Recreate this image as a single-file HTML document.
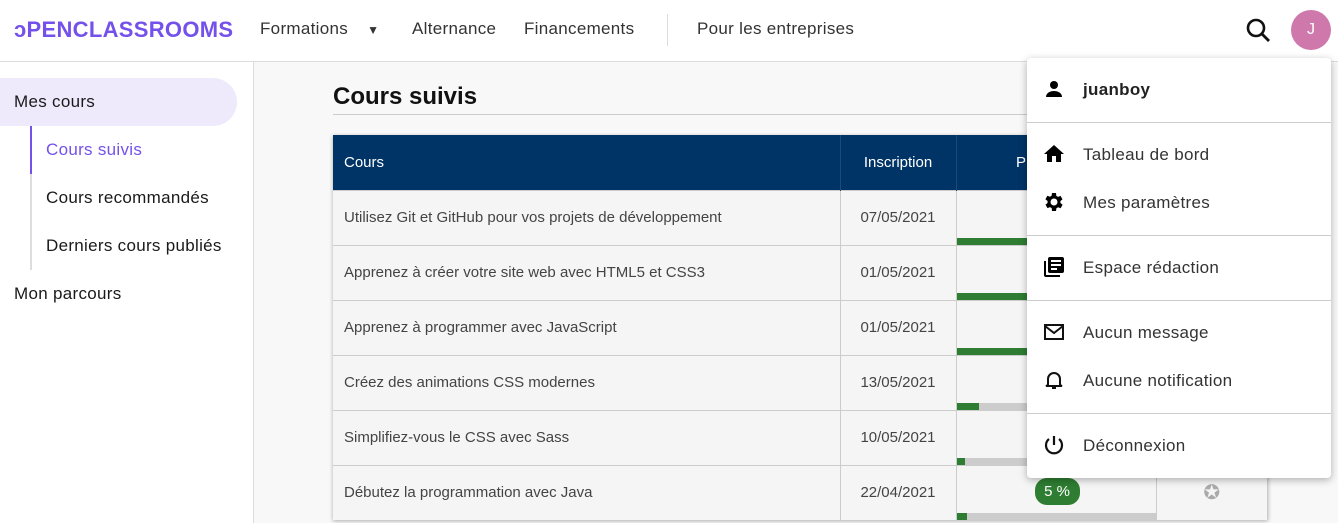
<!DOCTYPE html>
<html><head><meta charset="utf-8"><style>
*{box-sizing:border-box;margin:0;padding:0}
body{width:1338px;height:523px;overflow:hidden;font-family:"Liberation Sans",sans-serif;background:#fff;position:relative;color:#1a1a1a}
.hdr{position:absolute;left:0;top:0;width:1338px;height:62px;border-bottom:1px solid #ddd;background:#fff}
.logo{position:absolute;left:14px;top:17px;font-weight:900;font-size:22px;color:#7451eb;letter-spacing:0.3px}
.nav{position:absolute;top:19px;font-size:17px;color:#333;letter-spacing:0.3px}
.side{position:absolute;left:0;top:62px;width:254px;height:461px;border-right:1px solid #ddd;background:#fff}
.main{position:absolute;left:254px;top:62px;width:1084px;height:461px;background:#f8f8f8}
.si{position:absolute;font-size:17px;color:#1a1a1a;letter-spacing:0.3px}
table{position:absolute;left:333px;top:135px;width:935px;border-collapse:collapse;box-shadow:0 1px 4px rgba(0,0,0,.3);font-size:15px;color:#444}
th{background:#003366;color:#fff;font-weight:normal;height:55px;text-align:left;padding-left:11px;font-size:15px;border-right:1px solid #1d4a78}
td{height:55px;border-top:1px solid #ccc;background:#f5f5f5;border-right:1px solid #ccc;padding-left:11px}
td.c{text-align:center;padding:0}
.bar{position:absolute;left:0;bottom:0;height:7px;background:#ccc;width:200px}
.bar i{display:block;height:7px;background:#2e7d32}
.dd{position:absolute;left:1027px;top:58px;width:304px;height:420px;background:#fff;border-radius:4px;box-shadow:0 2px 8px rgba(0,0,0,.3)}
.it{position:absolute;left:56px;font-size:17px;color:#333;letter-spacing:0.3px}
.hr{position:absolute;left:0;width:304px;border-top:1px solid #ccc}
.ic{position:absolute;left:15px;width:24px;height:24px}
</style></head><body>
<div class="hdr">
<div class="logo">ↄPENCLASSROOMS</div>
<div class="nav" style="left:260px">Formations <span style="font-size:12px;margin-left:14px">▼</span></div>
<div class="nav" style="left:412px">Alternance</div>
<div class="nav" style="left:524px">Financements</div>
<div style="position:absolute;left:667px;top:14px;height:32px;border-left:1px solid #ddd"></div>
<div class="nav" style="left:697px">Pour les entreprises</div>
<svg style="position:absolute;left:1245px;top:17px" width="28" height="28" viewBox="0 0 28 28"><circle cx="11" cy="11" r="8" fill="none" stroke="#111" stroke-width="2.6"/><path d="M17 17l7 7" stroke="#111" stroke-width="2.8"/></svg>
<div style="position:absolute;left:1291px;top:10px;width:40px;height:40px;border-radius:50%;background:#cf78ab;color:#fff;text-align:center;line-height:40px;font-size:16px">J</div>
</div>
<div class="side">
<div style="position:absolute;left:0;top:16px;width:237px;height:48px;background:#eeeafc;border-radius:0 24px 24px 0"></div>
<div class="si" style="left:14px;top:30px">Mes cours</div>
<div style="position:absolute;left:30px;top:64px;height:144px;border-left:2px solid #ddd"></div>
<div style="position:absolute;left:30px;top:64px;height:48px;border-left:2px solid #7451eb"></div>
<div class="si" style="left:46px;top:78px;color:#7451eb">Cours suivis</div>
<div class="si" style="left:46px;top:126px">Cours recommandés</div>
<div class="si" style="left:46px;top:174px">Derniers cours publiés</div>
<div class="si" style="left:14px;top:222px">Mon parcours</div>
</div>
<div class="main">
<div style="position:absolute;left:79px;top:21px;font-size:24px;font-weight:bold;color:#111">Cours suivis</div>
<div style="position:absolute;left:79px;top:52px;width:935px;border-top:1px solid #ccc"></div>
</div>
<table>
<tr><th style="width:507px">Cours</th><th style="width:116px;text-align:center;padding:0">Inscription</th><th style="width:200px;text-align:center;padding:0">Progression</th><th style="padding:0"></th></tr>
<tr><td>Utilisez Git et GitHub pour vos projets de développement</td><td class="c">07/05/2021</td><td class="c" style="position:relative"><div class="bar"><i style="width:100%"></i></div></td><td class="c"></td></tr>
<tr><td>Apprenez à créer votre site web avec HTML5 et CSS3</td><td class="c">01/05/2021</td><td class="c" style="position:relative"><div class="bar"><i style="width:100%"></i></div></td><td class="c"></td></tr>
<tr><td>Apprenez à programmer avec JavaScript</td><td class="c">01/05/2021</td><td class="c" style="position:relative"><div class="bar"><i style="width:100%"></i></div></td><td class="c"></td></tr>
<tr><td>Créez des animations CSS modernes</td><td class="c">13/05/2021</td><td class="c" style="position:relative"><div class="bar"><i style="width:22px"></i></div></td><td class="c"></td></tr>
<tr><td>Simplifiez-vous le CSS avec Sass</td><td class="c">10/05/2021</td><td class="c" style="position:relative"><div class="bar"><i style="width:8px"></i></div></td><td class="c"></td></tr>
<tr><td>Débutez la programmation avec Java</td><td class="c">22/04/2021</td><td class="c" style="position:relative"><div style="position:absolute;left:78px;top:12px;width:45px;height:27px;border-radius:12px;background:#2e7d32;color:#fff;line-height:27px;font-size:15px">5 %</div><div class="bar"><i style="width:10px"></i></div></td><td class="c" style="color:#aaa;font-size:20px">✪</td></tr>
</table>
<div class="dd">
<svg class="ic" style="top:19px" viewBox="0 0 24 24"><circle cx="12" cy="8" r="4"/><path d="M4 20c0-4 4-6 8-6s8 2 8 6z"/></svg>
<div class="it" style="top:22px;font-weight:bold;color:#222">juanboy</div>
<div class="hr" style="top:64px"></div>
<svg class="ic" style="top:84px" viewBox="0 0 24 24"><path d="M10 20v-6h4v6h5v-8h3L12 3 2 12h3v8z"/></svg>
<div class="it" style="top:87px">Tableau de bord</div>
<svg class="ic" style="top:132px" viewBox="0 0 24 24"><path d="M19.4 13a7 7 0 000-2l2.1-1.6-2-3.5-2.5 1a7 7 0 00-1.7-1L15 3h-4l-.4 2.7a7 7 0 00-1.7 1l-2.5-1-2 3.5L6.6 11a7 7 0 000 2l-2.1 1.6 2 3.5 2.5-1a7 7 0 001.7 1L11 21h4l.4-2.7a7 7 0 001.7-1l2.5 1 2-3.5zM13 15.5a3.5 3.5 0 110-7 3.5 3.5 0 010 7z" transform="translate(-1 0)"/></svg>
<div class="it" style="top:135px">Mes paramètres</div>
<div class="hr" style="top:177px"></div>
<svg class="ic" style="top:197px" viewBox="0 0 24 24"><path d="M4 6H2v14a2 2 0 002 2h14v-2H4zm16-4H8a2 2 0 00-2 2v12a2 2 0 002 2h12a2 2 0 002-2V4a2 2 0 00-2-2zm-1 9H9V9h10zm-4 4H9v-2h6zm4-8H9V5h10z"/></svg>
<div class="it" style="top:200px">Espace rédaction</div>
<div class="hr" style="top:242px"></div>
<svg class="ic" style="top:262px" viewBox="0 0 24 24"><path d="M3 5h18v14H3z M3 6l9 7 9-7" fill="none" stroke="#111" stroke-width="2"/></svg>
<div class="it" style="top:265px">Aucun message</div>
<svg class="ic" style="top:310px" viewBox="0 0 24 24"><path d="M6 17V11a6 6 0 0112 0v6l2 1H4z M10 20h4" fill="none" stroke="#111" stroke-width="2"/></svg>
<div class="it" style="top:313px">Aucune notification</div>
<div class="hr" style="top:355px"></div>
<svg class="ic" style="top:375px" viewBox="0 0 24 24"><path d="M12 3v9 M7 6a8 8 0 1010 0" fill="none" stroke="#111" stroke-width="2.2"/></svg>
<div class="it" style="top:378px">Déconnexion</div>
</div>
</body></html>
